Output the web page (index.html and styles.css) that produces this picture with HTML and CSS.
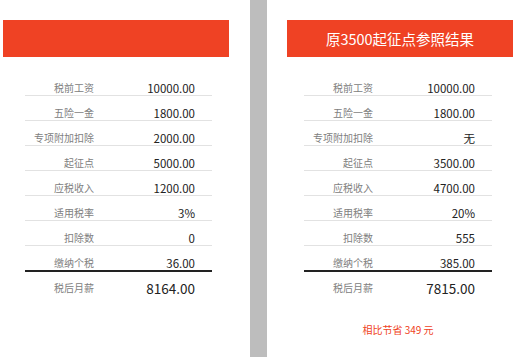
FILE: index.html
```html
<!DOCTYPE html>
<html lang="zh-CN">
<head>
<meta charset="utf-8">
<title>个税计算结果</title>
<link rel="stylesheet" href="styles.css">
</head>
<body>
<div class="page">
  <section class="panel panel-left">
    <div class="banner"></div>
    <div class="table">
      <div class="row"><span class="label">税前工资</span><span class="value">10000.00</span></div>
      <div class="row"><span class="label">五险一金</span><span class="value">1800.00</span></div>
      <div class="row"><span class="label">专项附加扣除</span><span class="value">2000.00</span></div>
      <div class="row"><span class="label">起征点</span><span class="value">5000.00</span></div>
      <div class="row"><span class="label">应税收入</span><span class="value">1200.00</span></div>
      <div class="row"><span class="label">适用税率</span><span class="value">3%</span></div>
      <div class="row"><span class="label">扣除数</span><span class="value">0</span></div>
      <div class="row row-tax"><span class="label">缴纳个税</span><span class="value">36.00</span></div>
      <div class="row row-total"><span class="label">税后月薪</span><span class="value">8164.00</span></div>
    </div>
  </section>
  <div class="divider"></div>
  <section class="panel panel-right">
    <div class="banner">原3500起征点参照结果</div>
    <div class="table">
      <div class="row"><span class="label">税前工资</span><span class="value">10000.00</span></div>
      <div class="row"><span class="label">五险一金</span><span class="value">1800.00</span></div>
      <div class="row"><span class="label">专项附加扣除</span><span class="value">无</span></div>
      <div class="row"><span class="label">起征点</span><span class="value">3500.00</span></div>
      <div class="row"><span class="label">应税收入</span><span class="value">4700.00</span></div>
      <div class="row"><span class="label">适用税率</span><span class="value">20%</span></div>
      <div class="row"><span class="label">扣除数</span><span class="value">555</span></div>
      <div class="row row-tax"><span class="label">缴纳个税</span><span class="value">385.00</span></div>
      <div class="row row-total"><span class="label">税后月薪</span><span class="value">7815.00</span></div>
      <p class="saving">相比节省 349 元</p>
    </div>
  </section>
</div>
</body>
</html>
```
FILE: styles.css
```css
html, body {
  margin: 0;
  padding: 0;
  background: #ffffff;
}

body {
  font-family: "Noto Sans CJK SC", "Noto Sans", sans-serif;
}

.page {
  display: flex;
  height: 357px;
  overflow: hidden;
}

.panel-left {
  width: 250px;
  flex: none;
}

.divider {
  width: 17px;
  flex: none;
  background: #bdbdbd;
}

.panel-right {
  flex: 1;
  min-width: 0;
}

.banner {
  margin-top: 20px;
  height: 37px;
  width: 226px;
  background: #ef4224;
  color: #ffffff;
  font-size: 14.5px;
  display: flex;
  align-items: center;
  justify-content: center;
}

.panel-left .banner {
  margin-left: 3px;
}

.panel-right .banner {
  margin-left: 20px;
}

.table {
  margin-top: 14px;
}

.panel-left .table {
  margin-left: 25px;
  width: 187px;
}

.panel-right .table {
  margin-left: 37px;
  width: 188px;
}

.row {
  display: grid;
  grid-template-columns: 69px 1fr;
  padding-top: 10px;
  line-height: 14px;
  border-bottom: 1px solid #e2e2e2;
}

.label {
  text-align: right;
  font-size: 10px;
  color: #808080;
}

.value {
  text-align: right;
  padding-right: 17px;
  font-size: 11.5px;
  color: #222222;
}

.row-tax {
  border-bottom: 2px solid #222222;
}

.row-total {
  padding-top: 9px;
  border-bottom: none;
}

.row-total .value {
  font-size: 13.5px;
}

.saving {
  margin: 28px 0 0;
  text-align: center;
  font-size: 10px;
  line-height: 14px;
  color: #ef4224;
}
```
